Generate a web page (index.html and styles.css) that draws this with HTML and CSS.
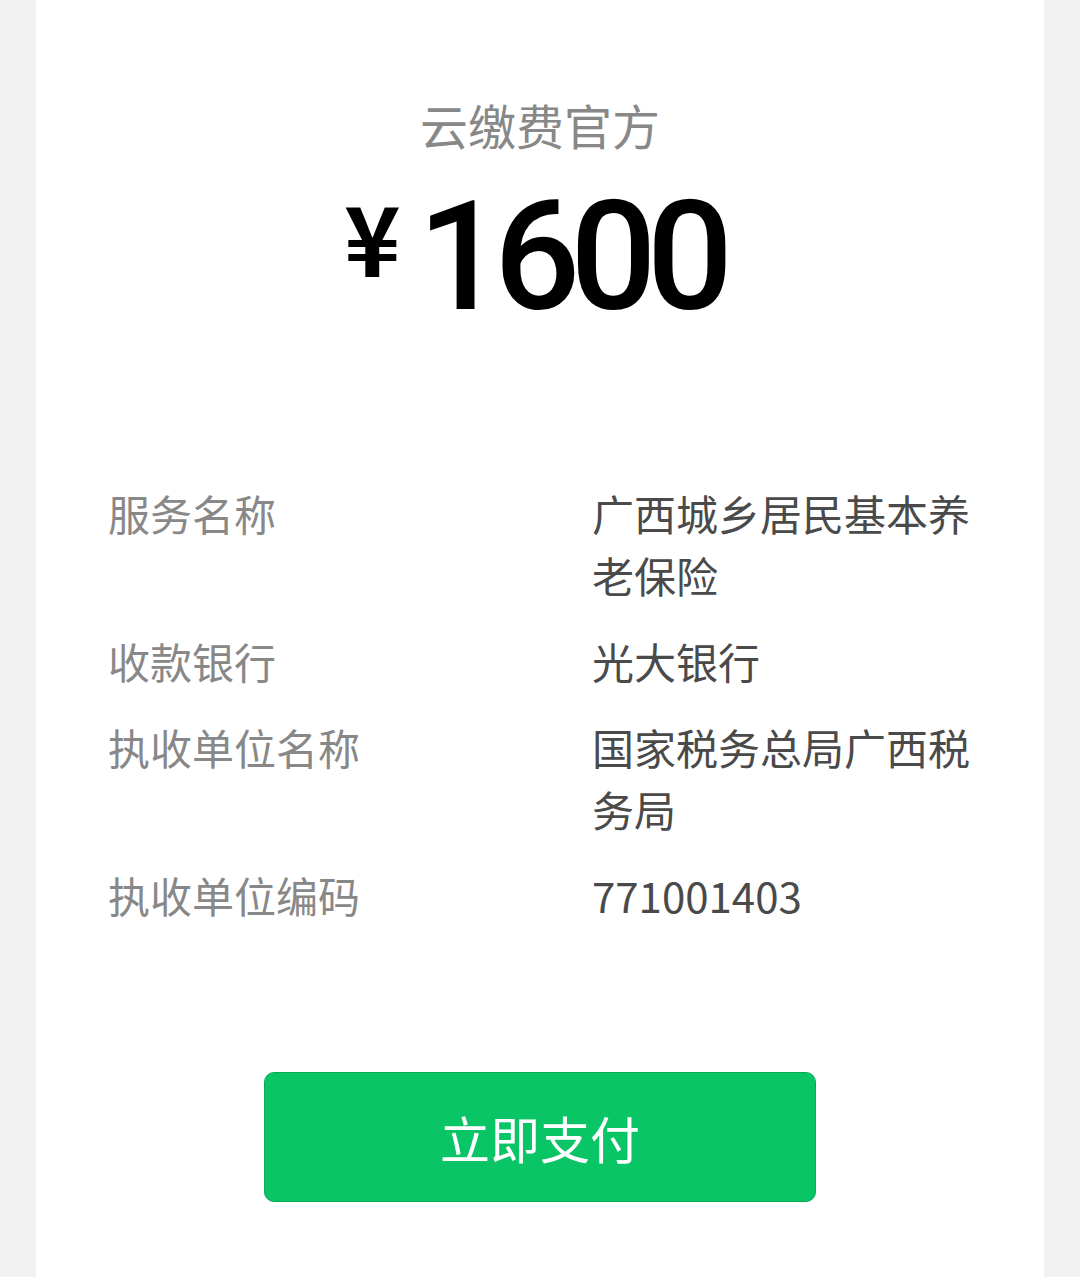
FILE: index.html
```html
<!DOCTYPE html>
<html>
<head>
  <meta charset="utf-8">
  <title>云缴费官方</title>
  <link rel="stylesheet" href="styles.css">
</head>
<body>
  <div class="card">
    <div class="payee">云缴费官方</div>
    <div class="amount"><span class="yen">¥</span><span class="num">1600</span></div>

    <div class="info">
      <div class="row">
        <div class="label">服务名称</div>
        <div class="value">广西城乡居民基本养老保险</div>
      </div>
      <div class="row">
        <div class="label">收款银行</div>
        <div class="value">光大银行</div>
      </div>
      <div class="row">
        <div class="label">执收单位名称</div>
        <div class="value">国家税务总局广西税务局</div>
      </div>
      <div class="row">
        <div class="label">执收单位编码</div>
        <div class="value">771001403</div>
      </div>
    </div>

    <div class="actions">
      <button class="btn-pay">立即支付</button>
    </div>
  </div>
</body>
</html>
```

FILE: styles.css
```css
html, body {
  margin: 0;
  padding: 0;
}
body {
  background-color: #f2f2f2;
  font-family: "Noto Sans CJK SC", "Noto Sans", sans-serif;
}
.card {
  margin: 0 36px;
  min-height: 1277px;
  box-sizing: border-box;
  background-color: #fff;
  padding: 92px 72px 0 72px;
}
.payee {
  text-align: center;
  font-size: 48px;
  line-height: 64px;
  color: #888;
}
.amount {
  text-align: center;
  height: 160px;
  line-height: 160px;
  color: #000;
}
.amount .yen {
  font-family: "Noto Sans CJK SC", sans-serif;
  font-weight: 700;
  font-size: 96px;
  vertical-align: 32px;
  margin-right: 17px;
}
.amount .num {
  font-family: "Roboto", sans-serif;
  font-weight: 500;
  font-size: 152px;
  letter-spacing: -10px;
  margin-right: 13px;
}
.info {
  margin-top: 166px;
  display: flex;
  flex-direction: column;
  gap: 24px;
}
.row {
  display: grid;
  grid-template-columns: 484px 1fr;
  font-size: 42px;
  line-height: 62px;
}
.label {
  color: #888;
}
.value {
  color: #4a4a4a;
}
.actions {
  margin-top: 146px;
  display: flex;
  justify-content: center;
}
.btn-pay {
  width: 552px;
  height: 130px;
  border: 1px solid #0aab55;
  border-radius: 10px;
  background-color: #0ac566;
  color: #fff;
  font-family: "Noto Sans CJK SC", sans-serif;
  font-size: 50px;
  cursor: pointer;
}
```
